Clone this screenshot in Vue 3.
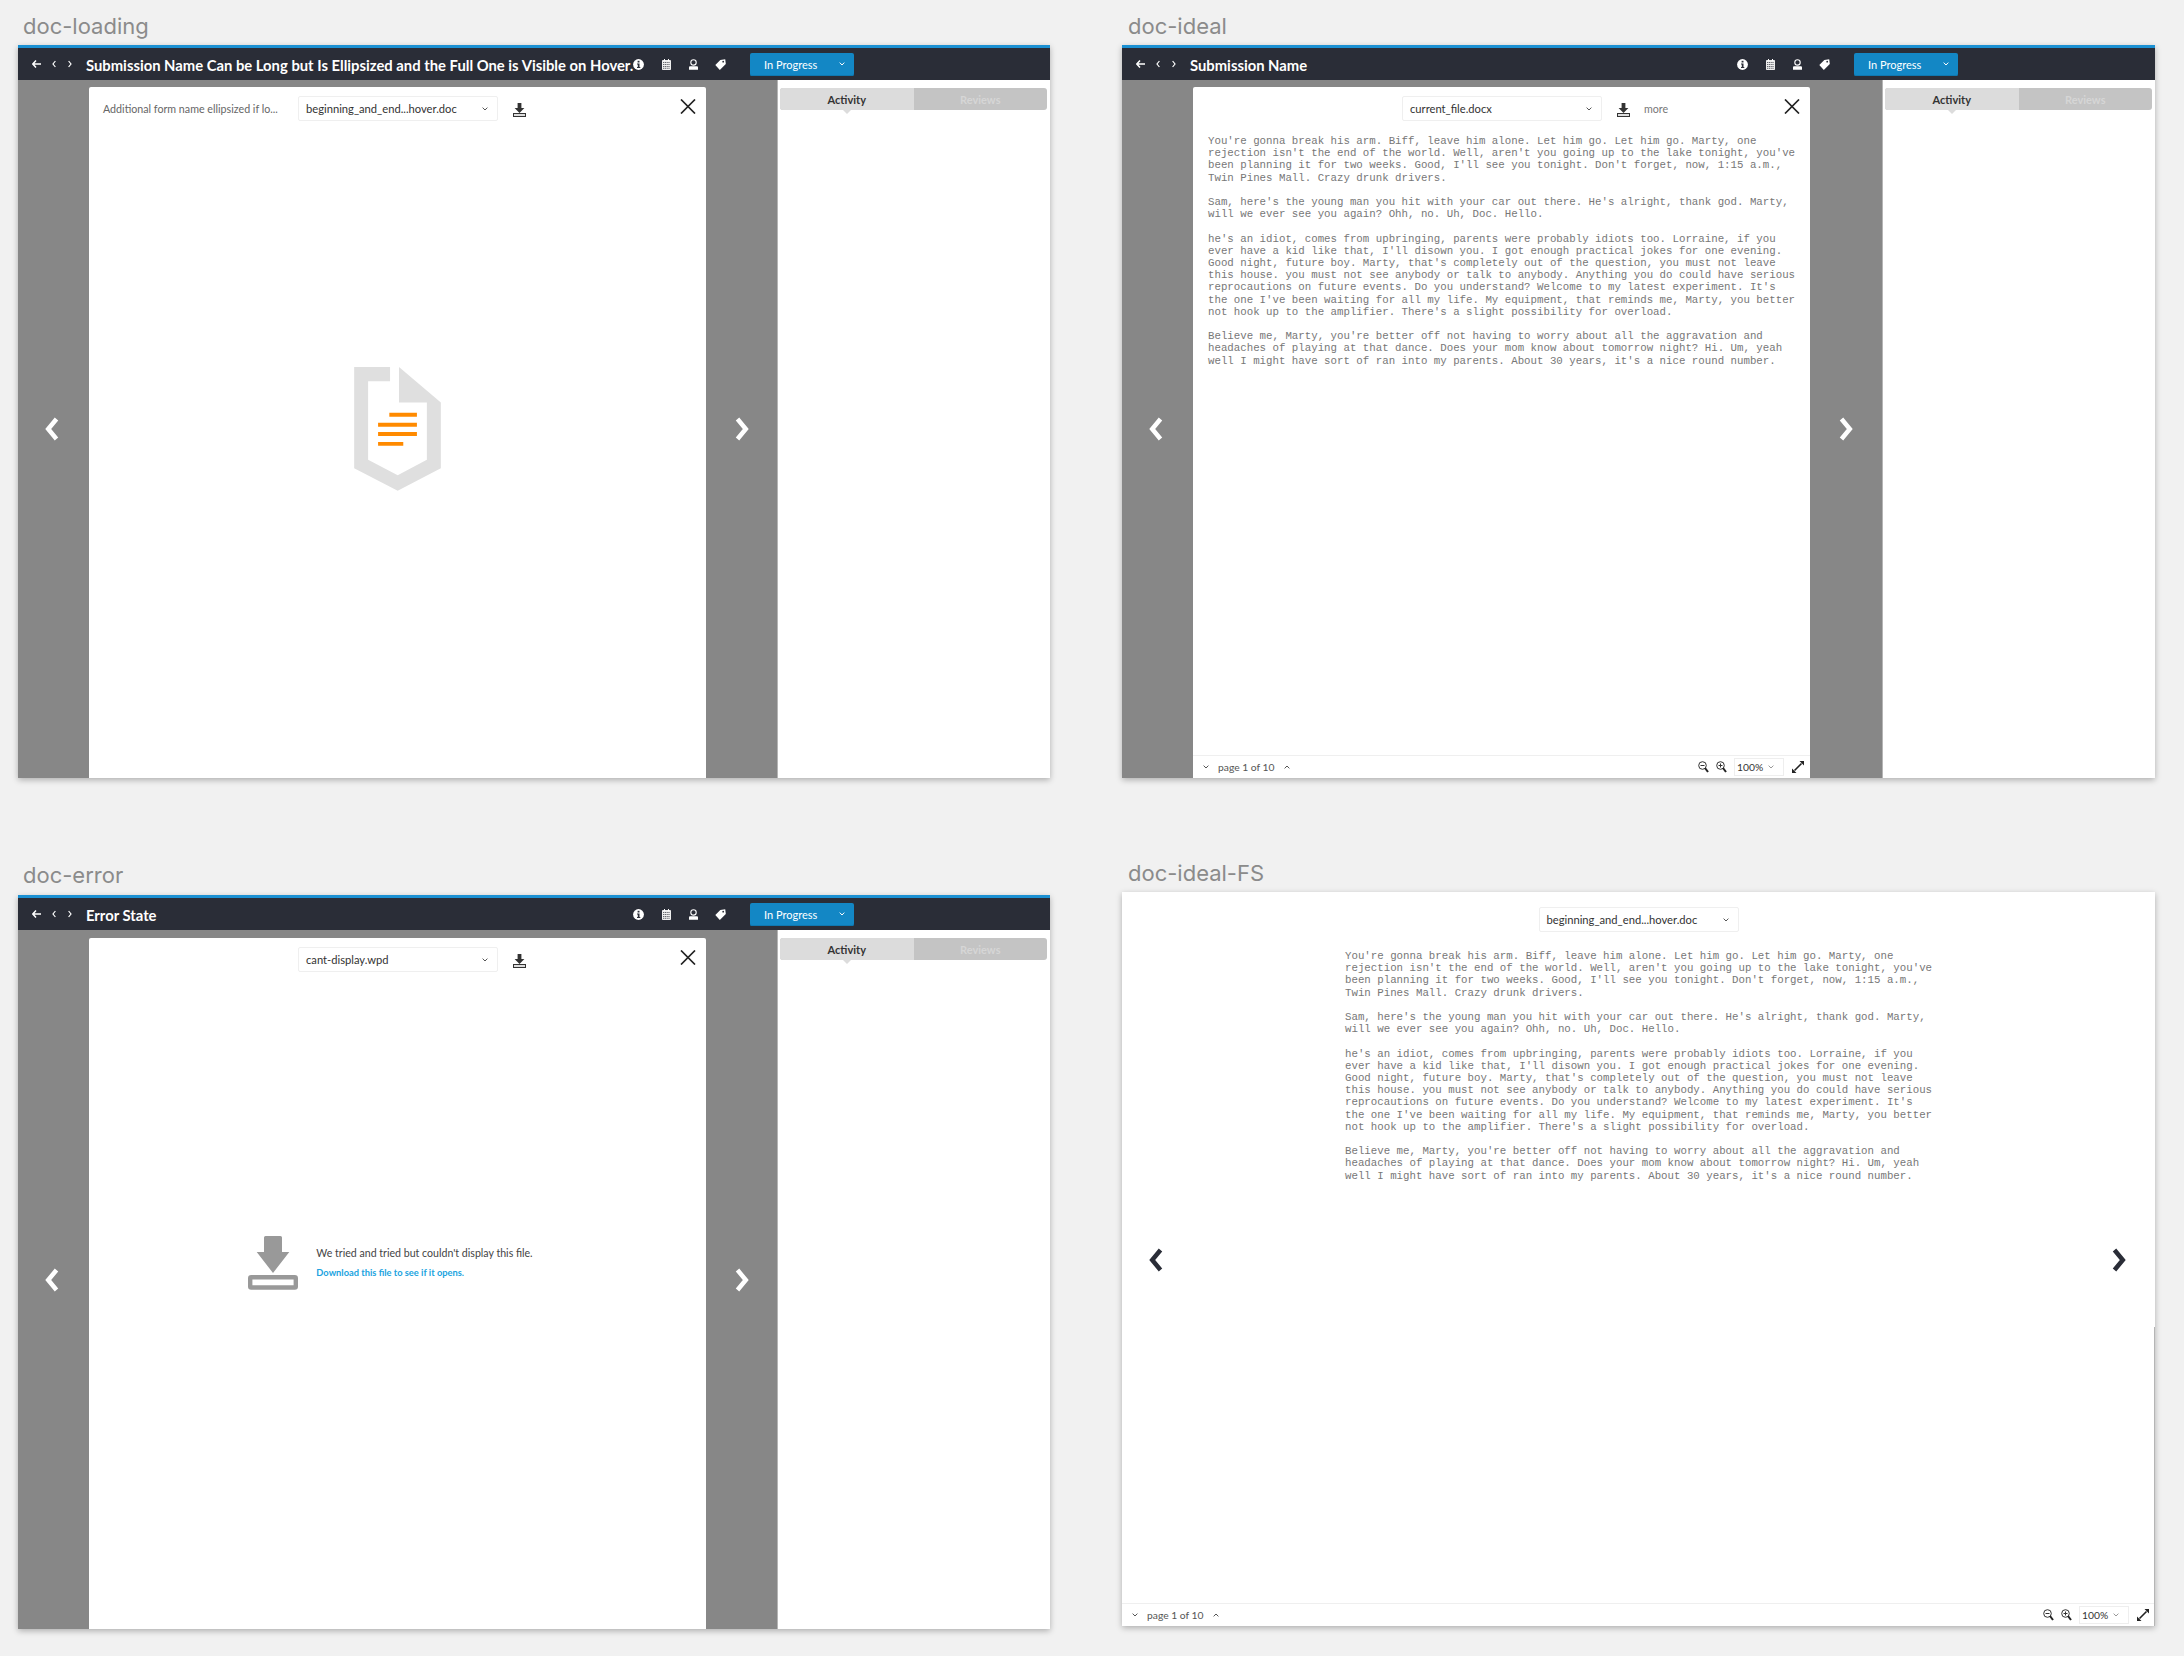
<script setup>
const doc = [
  "You're gonna break his arm. Biff, leave him alone. Let him go. Let him go. Marty, one\nrejection isn't the end of the world. Well, aren't you going up to the lake tonight, you've\nbeen planning it for two weeks. Good, I'll see you tonight. Don't forget, now, 1:15 a.m.,\nTwin Pines Mall. Crazy drunk drivers.",
  "Sam, here's the young man you hit with your car out there. He's alright, thank god. Marty,\nwill we ever see you again? Ohh, no. Uh, Doc. Hello.",
  "he's an idiot, comes from upbringing, parents were probably idiots too. Lorraine, if you\never have a kid like that, I'll disown you. I got enough practical jokes for one evening.\nGood night, future boy. Marty, that's completely out of the question, you must not leave\nthis house. you must not see anybody or talk to anybody. Anything you do could have serious\nreprocautions on future events. Do you understand? Welcome to my latest experiment. It's\nthe one I've been waiting for all my life. My equipment, that reminds me, Marty, you better\nnot hook up to the amplifier. There's a slight possibility for overload.",
  "Believe me, Marty, you're better off not having to worry about all the aggravation and\nheadaches of playing at that dance. Does your mom know about tomorrow night? Hi. Um, yeah\nwell I might have sort of ran into my parents. About 30 years, it's a nice round number."
].join("\n\n")

const panels = [
  { id: 'loading', label: 'doc-loading', title: 'Submission Name Can be Long but Is Ellipsized and the Full One is Visible on Hover.', note: 'Additional form name ellipsized if lo...', file: 'beginning_and_end...hover.doc', state: 'loading' },
  { id: 'ideal', label: 'doc-ideal', title: 'Submission Name', file: 'current_file.docx', more: true, state: 'doc' },
  { id: 'error', label: 'doc-error', title: 'Error State', file: 'cant-display.wpd', state: 'error' }
]
</script>

<template>
  <div class="page">
    <section v-for="p in panels" :key="p.id" class="cell" :class="'cell-' + p.id">
      <h2 class="label">{{ p.label }}</h2>
      <div class="panel">
        <header class="head">
          <div class="nav">
            <svg width="9" height="8" viewBox="0 0 9 8"><path d="M4 .5 .8 4 4 7.500M1 4h8" fill="none" stroke="#fff" stroke-width="1.500"/></svg>
            <svg width="4" height="8" viewBox="0 0 4 8"><path d="M3.400 1 1 4l2.400 3" fill="none" stroke="#fff" stroke-width="1.200"/></svg>
            <svg width="4" height="8" viewBox="0 0 4 8"><path d="M.6 1 3 4 .6 7" fill="none" stroke="#fff" stroke-width="1.200"/></svg>
          </div>
          <h1 class="title">{{ p.title }}</h1>
          <div class="tools">
            <svg class="t-info" width="11" height="11" viewBox="0 0 11 11"><circle cx="5.500" cy="5.500" r="5.400" fill="#fff"/><rect x="4.600" y="1.800" width="1.900" height="1.700" fill="#2a2d37"/><path d="M4 4.500h2.500v3.600h.8v1H4v-1h.8V5.500H4z" fill="#2a2d37"/></svg>
            <svg width="9" height="11" viewBox="0 0 9 11"><rect y="1" width="9" height="10" rx=".8" fill="#eee"/><path d="M2 0h1v2H2zM6 0h1v2H6z" fill="#fff"/><path d="M1 3.500h7M1 5.500h7M1 7.500h7M1 9.300h7" stroke="#2a2d37" stroke-width=".7" stroke-dasharray="1.200 .6"/></svg>
            <svg width="9" height="11" viewBox="0 0 9 11"><circle cx="4.500" cy="3.400" r="2.700" fill="none" stroke="#fff" stroke-width="1.100"/><path d="M0 10.800V8.500C0 7.700.5 7.300 1.300 7.300h6.400c.8 0 1.300.4 1.300 1.200v2.300z" fill="#fff"/></svg>
            <svg class="t-tag" width="11" height="11" viewBox="0 0 11 11"><path d="M5.300 .9 10.200 .3l.6 4.800L4.800 10.900.3 6z" fill="#fff"/><circle cx="8.200" cy="2.700" r=".9" fill="#2a2d37"/></svg>
          </div>
          <div class="status">
            <span>In Progress</span>
            <svg width="6" height="4" viewBox="0 0 6 4"><path d="M.7.6 3 3l2.300-2.400" fill="none" stroke="#fff" stroke-width="1"/></svg>
          </div>
        </header>
        <div class="body">
          <div class="gutter gutter-l">
            <svg width="14" height="24" viewBox="0 0 14 24"><path d="M11.500 2 3.200 12l8.300 10" fill="none" stroke="#fff" stroke-width="4.500"/></svg>
          </div>
          <div class="modal">
            <div class="top">
              <div class="note">{{ p.note }}</div>
              <div class="select">
                <span>{{ p.file }}</span>
                <svg width="6" height="4" viewBox="0 0 6 4"><path d="M.6.6 3 3 5.400.6" fill="none" stroke="#555" stroke-width="1"/></svg>
              </div>
              <svg class="dl" width="13" height="14" viewBox="0 0 13 14"><path d="M4.600 0h3.800v5h3L6.500 10 1.600 5h3z" fill="#333"/><rect x=".5" y="10.500" width="12" height="3" fill="#ddd" stroke="#333"/></svg>
              <span v-if="p.more" class="more">more</span>
              <svg class="close" width="16" height="15" viewBox="0 0 16 15"><path d="M1 .5 15 14.500M15 .5 1 14.500" stroke="#222" stroke-width="1.700"/></svg>
            </div>
            <div v-if="p.state === 'loading'" class="centre">
              <svg width="87" height="124" viewBox="54 27 87 124.500">
                <path d="M54 27h36v14.300H68V120l29.700 15.700L127 120V62.700H99V27l42 35.700v66l-43.300 22.600L54 128.700z" fill="#dfdfdf"/>
                <path d="M89.300 73h27.700v4H89.300zM78 83h39v4H78zM78 92.300h39v4H78zM78 102.300h25.300v3.700H78z" fill="#ff8a00"/>
              </svg>
            </div>
            <div v-else-if="p.state === 'error'" class="centre centre-error">
              <svg width="50" height="54" viewBox="0 0 50 54">
                <path d="M16 1.500A1.500 1.500 0 0 1 17.500 0h15A1.500 1.500 0 0 1 34 1.500V16h7.300L25 37 8.700 16H16z" fill="#999"/>
                <rect x="2.200" y="41.300" width="45.600" height="10.200" rx="1" fill="#fff" stroke="#999" stroke-width="4.400"/>
              </svg>
              <div class="err">
                <p>We tried and tried but couldn't display this file.</p>
                <a>Download this file to see if it opens.</a>
              </div>
            </div>
            <template v-else>
              <pre class="doc">{{ doc }}</pre>
              <footer class="foot">
                <svg width="6" height="4" viewBox="0 0 6 4"><path d="M.6.6 3 3 5.400.6" fill="none" stroke="#555"/></svg>
                <span class="pg">page 1 of 10</span>
                <svg width="6" height="4" viewBox="0 0 6 4"><path d="M.6 3.400 3 1l2.400 2.400" fill="none" stroke="#555"/></svg>
                <svg class="zoom-a" width="11" height="12" viewBox="0 0 11 12"><circle cx="4.500" cy="4.500" r="3.800" fill="none" stroke="#333"/><path d="M2.500 4.500h4" stroke="#333"/><path d="m7 7 3 4" stroke="#222" stroke-width="2"/></svg>
                <svg class="zoom-b" width="11" height="12" viewBox="0 0 11 12"><circle cx="4.500" cy="4.500" r="3.800" fill="none" stroke="#333"/><path d="M2.500 4.500h4M4.500 2.500v4" stroke="#333"/><path d="m7 7 3 4" stroke="#222" stroke-width="2"/></svg>
                <div class="pct"><span>100%</span><svg width="6" height="4" viewBox="0 0 6 4"><path d="M.6.6 3 3 5.400.6" fill="none" stroke="#999"/></svg></div>
                <svg class="expand" width="12" height="12" viewBox="0 0 12 12"><path d="M2.500 9.500 9.500 2.500" stroke="#222" stroke-width="1.600"/><path d="M7.500 0H12v4.500zM0 7.500V12h4.500z" fill="#222"/></svg>
              </footer>
            </template>
          </div>
          <div class="gutter gutter-r">
            <svg width="14" height="24" viewBox="0 0 14 24"><path d="M2.500 2 10.800 12 2.500 22" fill="none" stroke="#fff" stroke-width="4.500"/></svg>
          </div>
          <aside class="side">
            <div class="tabs">
              <div class="tab on">Activity</div>
              <div class="tab">Reviews</div>
            </div>
          </aside>
        </div>
      </div>
    </section>

    <section class="cell cell-fs">
      <h2 class="label">doc-ideal-FS</h2>
      <div class="panel fs">
        <svg class="fs-arrow fs-l" width="14" height="24" viewBox="0 0 14 24"><path d="M11.500 2 3.200 12l8.300 10" fill="none" stroke="#2a2d37" stroke-width="4.500"/></svg>
        <svg class="fs-arrow fs-r" width="14" height="24" viewBox="0 0 14 24"><path d="M2.500 2 10.800 12 2.500 22" fill="none" stroke="#2a2d37" stroke-width="4.500"/></svg>
        <span class="fs-edge"></span>
        <div class="top fs-top">
          <div class="select">
            <span>beginning_and_end...hover.doc</span>
            <svg width="6" height="4" viewBox="0 0 6 4"><path d="M.6.6 3 3 5.400.6" fill="none" stroke="#555"/></svg>
          </div>
        </div>
        <pre class="doc fs-doc">{{ doc }}</pre>
        <footer class="foot">
          <svg width="6" height="4" viewBox="0 0 6 4"><path d="M.6.6 3 3 5.400.6" fill="none" stroke="#555"/></svg>
          <span class="pg">page 1 of 10</span>
          <svg width="6" height="4" viewBox="0 0 6 4"><path d="M.6 3.400 3 1l2.400 2.400" fill="none" stroke="#555"/></svg>
          <svg class="zoom-a" width="11" height="12" viewBox="0 0 11 12"><circle cx="4.500" cy="4.500" r="3.800" fill="none" stroke="#333"/><path d="M2.500 4.500h4" stroke="#333"/><path d="m7 7 3 4" stroke="#222" stroke-width="2"/></svg>
          <svg class="zoom-b" width="11" height="12" viewBox="0 0 11 12"><circle cx="4.500" cy="4.500" r="3.800" fill="none" stroke="#333"/><path d="M2.500 4.500h4M4.500 2.500v4" stroke="#333"/><path d="m7 7 3 4" stroke="#222" stroke-width="2"/></svg>
          <div class="pct"><span>100%</span><svg width="6" height="4" viewBox="0 0 6 4"><path d="M.6.6 3 3 5.400.6" fill="none" stroke="#999"/></svg></div>
          <svg class="expand" width="12" height="12" viewBox="0 0 12 12"><path d="M2.500 9.500 9.500 2.500" stroke="#222" stroke-width="1.600"/><path d="M7.500 0H12v4.500zM0 7.500V12h4.500z" fill="#222"/></svg>
        </footer>
      </div>
    </section>
  </div>
</template>

<style>
html, body { margin: 0; background: #f1f1f1; }
</style>

<style scoped>
.page {
  width: 2184px;
  height: 1656px;
  box-sizing: border-box;
  background: #f1f1f1;
  padding-left: 18px;
  display: grid;
  grid-template-columns: 1032px 1033px;
  grid-template-rows: 850px 806px;
  column-gap: 72px;
  font-family: Lato, "Open Sans", sans-serif;
}
.cell { display: flex; flex-direction: column; min-width: 0; }
.label {
  margin: 0;
  height: 45px;
  padding: 11px 0 0 5px;
  box-sizing: border-box;
  font: 400 22px/30px Inter, sans-serif;
  color: #8b8b8b;
}
.cell-error .label { padding-top: 10px; }
.cell-ideal .label, .cell-fs .label { padding-left: 6px; }
.cell-fs .label { height: 42px; padding-top: 8px; }
.panel {
  height: 733px;
  display: flex;
  flex-direction: column;
  background: #fff;
  box-shadow: 0 2px 6px rgba(0,0,0,.28);
  border-top: 3px solid #1b90d2;
  box-sizing: border-box;
}
.cell-error .panel { height: 734px; }
.head {
  height: 32px;
  flex: none;
  display: flex;
  align-items: center;
  background: #2a2d37;
  color: #fff;
  padding-left: 14px;
  box-sizing: border-box;
}
.nav { display: flex; align-items: center; width: 54px; flex: none; }
.nav svg:nth-child(2) { margin-left: 11px; }
.nav svg:nth-child(3) { margin-left: 12px; }
.title {
  margin: 0;
  padding-top: 1px;
  width: 546px;
  flex: none;
  font: 700 14.800px/20px Lato, sans-serif;
  white-space: nowrap;
}
.tools { display: flex; align-items: center; gap: 18px; width: 118px; flex: none; }
.t-info { margin-left: 1px; }
.t-tag { margin-left: -1px; }
.status {
  width: 104px;
  height: 23px;
  flex: none;
  display: flex;
  align-items: center;
  justify-content: space-between;
  background: #1387c5;
  box-shadow: inset 0 -1px 0 #0f78b0;
  border-radius: 2px;
  padding: 0 9px 0 14px;
  box-sizing: border-box;
  font: 400 11px Lato, sans-serif;
}
.body { flex: 1; display: flex; min-height: 0; background: #878787; }
.gutter {
  width: 71px;
  flex: none;
  display: flex;
  align-items: center;
  justify-content: center;
}
.gutter-l { padding-right: 4px; box-sizing: border-box; }
.gutter-r { flex: 1; }
.modal {
  width: 617px;
  flex: none;
  margin-top: 7px;
  background: #fff;
  display: flex;
  flex-direction: column;
  border-radius: 2px 2px 0 0;
}
.cell-error .modal { margin-top: 8px; }
.top { display: flex; align-items: flex-start; height: 48px; flex: none; padding-top: 9px; box-sizing: border-box; }
.note {
  width: 209px;
  flex: none;
  box-sizing: border-box;
  padding: 6px 0 0 14px;
  font-size: 10.700px;
  line-height: 14px;
  color: #666;
  white-space: nowrap;
}
.select {
  width: 200px;
  height: 25px;
  flex: none;
  display: flex;
  align-items: center;
  justify-content: space-between;
  box-sizing: border-box;
  padding: 0 9px 0 7px;
  border: 1px solid #efefef;
  border-radius: 2px;
  font-size: 11.200px;
  color: #333;
}
.dl { margin: 7px 0 0 15px; flex: none; }
.more { margin: 6px 0 0 14px; font-size: 10.700px; line-height: 14px; color: #777; }
.close { margin: 3px 10px 0 auto; flex: none; }
.centre {
  flex: 1;
  display: flex;
  align-items: center;
  justify-content: center;
  padding-bottom: 56px;
}
.centre-error { padding: 0 14px 90px 0; gap: 18px; }
.err p { margin: 0; font-size: 10.600px; line-height: 14px; color: #444; }
.err a { display: block; margin-top: 6px; font-size: 9.300px; line-height: 14px; font-weight: 700; color: #20a3e0; }
.doc {
  margin: 0;
  padding-left: 15px;
  flex: 1;
  min-height: 0;
  font: 400 10.750px/12.200px "Liberation Mono", monospace;
  color: #777;
  white-space: pre;
}
.foot {
  height: 23px;
  flex: none;
  display: flex;
  align-items: center;
  box-sizing: border-box;
  border-top: 1px solid #efefef;
  padding-left: 10px;
  font-size: 10.300px;
  color: #555;
}
.pg { margin: 0 9px 0 9px; }
.zoom-a { margin-left: auto; }
.zoom-b { margin-left: 7px; }
.pct {
  width: 50px;
  height: 18px;
  margin-left: 7px;
  box-sizing: border-box;
  border: 1px solid #eee;
  display: flex;
  align-items: center;
  justify-content: space-between;
  padding: 0 9px 0 2px;
  color: #333;
}
.expand { margin: 0 6px 0 8px; }
.side { width: 273px; flex: none; background: #fff; border-left: 1px solid #b5b5b5; box-sizing: border-box; padding: 8px 3px 0 2px; }
.tabs { display: flex; height: 22px; position: relative; background: #c4c4c4; border-radius: 3px; }
.tab { flex: 1; display: flex; align-items: center; justify-content: center; font-size: 11px; color: #d6d6d6; font-weight: 700; }
.tab.on { background: #dcdcdc; color: #333; position: relative; border-radius: 3px 0 0 3px; }
.tab.on::after {
  content: "";
  position: absolute;
  left: 50%;
  top: 100%;
  margin-left: -4px;
  border: 4px solid transparent;
  border-top-color: #dcdcdc;
  border-bottom: 0;
}
.fs { border-top: 0; position: relative; height: 734px; }
.fs-arrow { position: absolute; top: 356px; }
.fs-l { left: 27px; }
.fs-r { right: 29px; }
.fs-edge { position: absolute; right: 0; top: 435px; bottom: 0; width: 1px; background: #b5b5b5; }
.fs-top { justify-content: center; height: 58px; padding-top: 15px; }
.fs-doc { padding-left: 223px; }
</style>
